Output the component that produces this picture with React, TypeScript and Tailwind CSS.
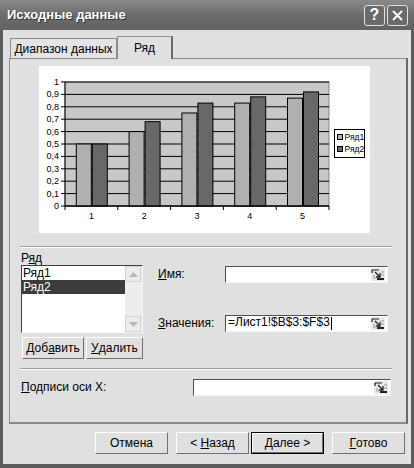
import React from "react";

const font = { fontFamily: '"Liberation Sans", Arial, sans-serif' };

function RefIcon() {
	return (
		<svg width="14" height="13" viewBox="0 0 14 13" className="shrink-0">
			<rect x="0" y="0" width="14" height="13" fill="#e8e8e8" />
			<path d="M1 2h7M1 2v3" stroke="#222" strokeWidth="1.2" fill="none" />
			<path d="M4 4l5 5M9 5v4H5" stroke="#222" strokeWidth="1.3" fill="none" />
			<path d="M10 4h3M10 7h3M2 8h2M2 10h3" stroke="#999" strokeWidth="1" />
			<rect x="6" y="10" width="7" height="2" fill="#222" />
		</svg>
	);
}

function Field({ value, width, caret }: { value?: string; width: string; caret?: boolean }) {
	return (
		<div className={`${width} h-[17px] bg-white border-t border-l border-[#505050] border-r border-b border-r-[#f4f4f4] border-b-[#f4f4f4] flex items-center pl-[2px] pr-[2px]`}>
			<span className="flex-1 text-[12px] leading-none text-black whitespace-nowrap">
				{value}
				{caret && <span className="inline-block w-px h-[13px] bg-black align-middle ml-px" />}
			</span>
			<RefIcon />
		</div>
	);
}

function Btn({ children, w, def }: { children: React.ReactNode; w: string; def?: boolean }) {
	return (
		<div className={`${w} h-[22px] ${def ? "border border-black" : ""}`}>
			<div className="w-full h-full bg-[#e0e0e0] border-t border-l border-white border-r border-b border-r-[#707070] border-b-[#707070] flex items-center justify-center text-[12px] text-black whitespace-nowrap">
				{children}
			</div>
		</div>
	);
}

function Chart() {
	const px = 26, py = 16, pw = 264, ph = 124;
	const s1 = [0.5, 0.6, 0.75, 0.83, 0.87];
	const s2 = [0.5, 0.68, 0.83, 0.88, 0.92];
	const cw = pw / 5;
	const bw = 15;
	const y = (v: number) => py + ph - v * ph;
	return (
		<svg width="331" height="167" viewBox="0 0 331 167" style={{ fontFamily: '"Liberation Sans", Arial, sans-serif' }}>
			<rect x="0" y="0" width="331" height="167" fill="#fff" />
			<rect x={px} y={py} width={pw} height={ph} fill="#c8c8c8" stroke="#888" />
			{Array.from({ length: 11 }, (_, i) => {
				const yy = py + ph - (i * ph) / 10;
				return (
					<g key={i}>
						<line x1={px} x2={px + pw} y1={yy} y2={yy} stroke="#000" strokeWidth="1" />
						<line x1={px - 4} x2={px} y1={yy} y2={yy} stroke="#000" />
						<text x={px - 6} y={yy + 3} fontSize="9" textAnchor="end" fill="#000">
							{i === 0 ? "0" : i === 10 ? "1" : `0,${i}`}
						</text>
					</g>
				);
			})}
			{s1.map((v, i) => {
				const x0 = px + i * cw + 11.3;
				return (
					<g key={i}>
						<rect x={x0} y={y(v)} width={bw} height={py + ph - y(v)} fill="#b0b0b0" stroke="#000" />
						<rect x={x0 + bw + 1} y={y(s2[i])} width={bw} height={py + ph - y(s2[i])} fill="#686868" stroke="#000" />
						<text x={px + i * cw + cw / 2} y={153} fontSize="9" textAnchor="middle" fill="#000">
							{i + 1}
						</text>
					</g>
				);
			})}
			<line x1={px} x2={px} y1={py} y2={py + ph} stroke="#000" />
			<line x1={px} x2={px + pw} y1={py + ph} y2={py + ph} stroke="#000" />
			{Array.from({ length: 6 }, (_, i) => (
				<line key={i} x1={px + i * cw} x2={px + i * cw} y1={py + ph} y2={py + ph + 4} stroke="#000" />
			))}
			<rect x="295.5" y="63.5" width="30" height="28" fill="#fff" stroke="#000" />
			<rect x="298.5" y="68.5" width="5" height="5" fill="#b0b0b0" stroke="#000" />
			<text x="305.5" y="74" fontSize="8.5" fill="#000">Ряд1</text>
			<rect x="298.5" y="80.5" width="5" height="5" fill="#686868" stroke="#000" />
			<text x="305.5" y="86" fontSize="8.5" fill="#000">Ряд2</text>
		</svg>
	);
}

function ScrollArrow({ up }: { up?: boolean }) {
	return (
		<div className="w-[16px] h-[16px] bg-[#ececec] border border-[#d4d4d4] flex items-center justify-center">
			<svg width="9" height="5" viewBox="0 0 9 5">
				<path d={up ? "M0 5L4.5 0L9 5Z" : "M0 0L4.5 5L9 0Z"} fill="#b8b8b8" />
			</svg>
		</div>
	);
}

export default function App() {
	return (
		<div className="w-[414px] h-[468px] bg-[#5c5c5c] flex flex-col" style={font}>
			{/* title bar */}
			<div className="h-[30px] flex items-center pl-[7px] pr-[6px] bg-gradient-to-b from-[#8a8a8a] via-[#6c6c6c] to-[#626262]">
				<span className="flex-1 text-white font-bold text-[13px] [text-shadow:1px_1px_0_#333]">Исходные данные</span>
				<div className="flex gap-[2px]">
					<div className="w-[21px] h-[21px] rounded-[3px] border border-[#e0e0e0] bg-[#6a6a6a] flex items-center justify-center text-white font-bold text-[16px] leading-none">?</div>
					<div className="w-[21px] h-[21px] rounded-[3px] border border-[#e0e0e0] bg-[#6a6a6a] flex items-center justify-center">
						<svg width="11" height="11" viewBox="0 0 11 11">
							<path d="M1 1L10 10M10 1L1 10" stroke="#fff" strokeWidth="2" />
						</svg>
					</div>
				</div>
			</div>
			{/* body */}
			<div className="mx-[3px] mb-[4px] flex-1 bg-[#e0e0e0] flex flex-col pt-[6px]">
				{/* tabs */}
				<div className="flex items-end h-[22px] pl-[7px] relative z-10">
					<div className="w-[107px] h-[20px] border border-b-0 border-[#8c8c8c] bg-[#e4e4e4] flex items-center justify-center text-[12px] text-black whitespace-nowrap">
						Диапазон данных
					</div>
					<div className="w-[56px] h-[23px] mb-[-1px] border border-b-0 border-[#8c8c8c] border-r-[#6a6a6a] border-r-2 bg-[#e0e0e0] flex items-center justify-center text-[12px] text-black">
						Ряд
					</div>
				</div>
				{/* panel */}
				<div className="ml-[6px] mr-[3px] h-[366px] border border-[#8c8c8c] border-r-2 border-r-[#6a6a6a] border-b-2 border-b-[#8a8a8a] flex flex-col">
					<div className="ml-[29px] mt-[7px] w-[331px] h-[167px]">
						<Chart />
					</div>
					<div className="ml-[10px] mr-[14px] mt-[13px] h-[2px] border-t border-[#a0a0a0] border-b border-b-white" />
					<div className="flex pl-[11px] pt-[3px]">
						<div className="flex flex-col w-[122px]">
							<span className="text-[12px] leading-[14px] text-black">
								Р<u>я</u>д
							</span>
							<div className="h-[68px] bg-white border-t border-l border-[#404040] border-r border-b border-r-[#f4f4f4] border-b-[#f4f4f4] flex">
								<div className="flex-1 flex flex-col text-[12px] leading-[14px]">
									<span className="pl-[1px] text-black">Ряд1</span>
									<span className="pl-[1px] bg-[#3c3c3c] text-white">Ряд2</span>
								</div>
								<div className="w-[17px] bg-[#ededed] flex flex-col justify-between">
									<ScrollArrow up />
									<ScrollArrow />
								</div>
							</div>
							<div className="flex gap-[2px] mt-[4px] ml-[1px]">
								<Btn w="w-[62px]">
									Доб<u>а</u>вить
								</Btn>
								<Btn w="w-[57px]">
									<u>У</u>далить
								</Btn>
							</div>
						</div>
						<div className="flex flex-col ml-[15px] pt-[14px]">
							<div className="flex items-center">
								<span className="w-[67px] text-[12px] text-black">
									<u>И</u>мя:
								</span>
								<Field width="w-[163px]" />
							</div>
							<div className="flex items-center mt-[31px]">
								<span className="w-[67px] text-[12px] text-black">
									<u>З</u>начения:
								</span>
								<Field width="w-[163px]" value="=Лист1!$B$3:$F$3" caret />
							</div>
						</div>
					</div>
					<div className="ml-[10px] mr-[14px] mt-[9px] h-[2px] border-t border-[#a0a0a0] border-b border-b-white" />
					<div className="flex items-center pl-[11px] mt-[8px]">
						<span className="w-[172px] text-[12px] text-black">
							<u>П</u>одписи оси X:
						</span>
						<Field width="w-[198px]" />
					</div>
				</div>
				{/* bottom buttons */}
				<div className="flex justify-end pr-[6px] mt-[8px] gap-[8px]">
					<Btn w="w-[73px]">Отмена</Btn>
					<div className="flex gap-[2px]">
						<Btn w="w-[73px]">
							&lt;&nbsp;<u>Н</u>азад
						</Btn>
						<Btn w="w-[73px]" def>
							<u>Д</u>алее &gt;
						</Btn>
					</div>
					<Btn w="w-[73px]">
						<u>Г</u>отово
					</Btn>
				</div>
			</div>
		</div>
	);
}
